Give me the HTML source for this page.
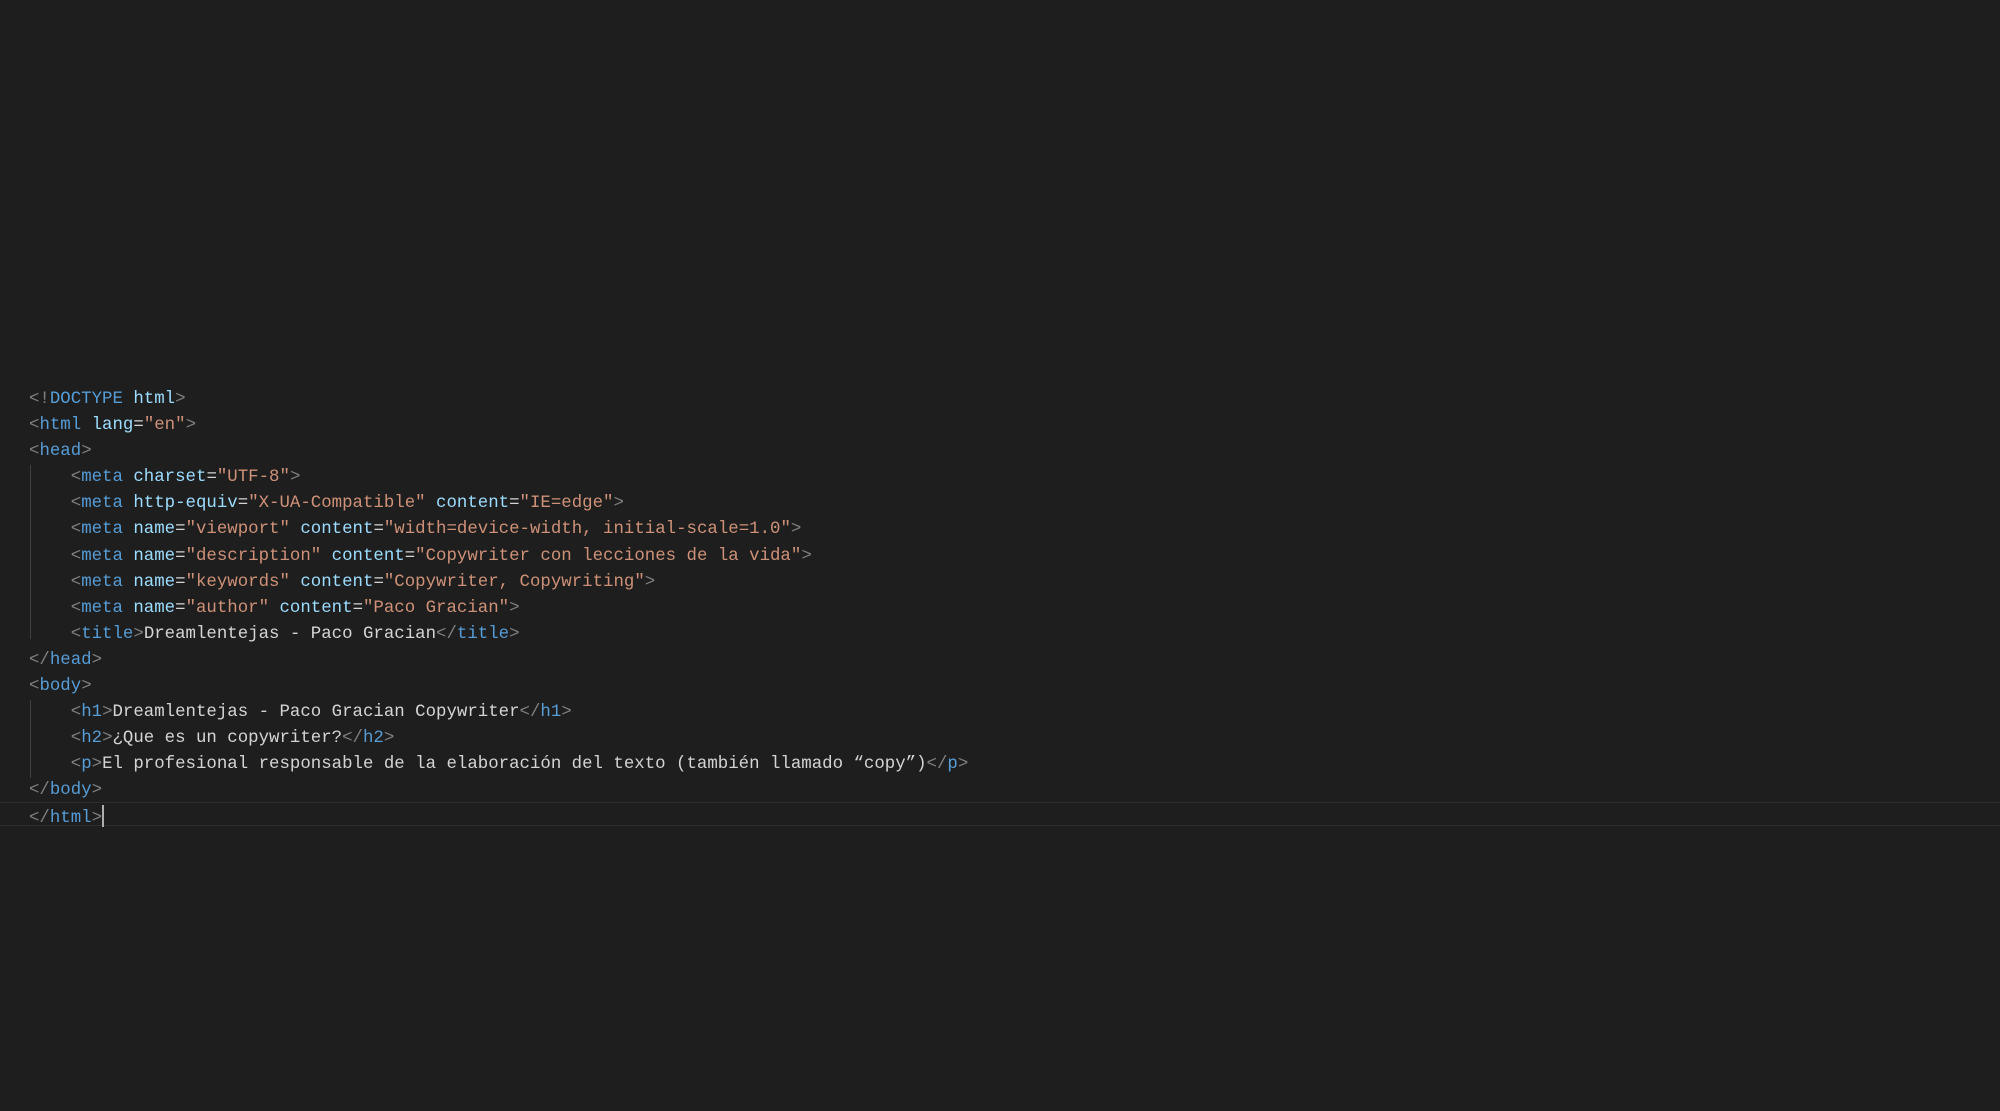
<!DOCTYPE html>
<html><head><style>
html,body{margin:0;background:#1e1e1e;width:2000px;height:1111px;overflow:hidden;}
.ed{position:absolute;left:29px;top:387px;font-family:"Liberation Mono",monospace;font-size:17.4px;line-height:26.1px;color:#d4d4d4;}
.l{height:26.1px;position:relative;white-space:pre}
.g{color:#808080}.t{color:#569cd6}.a{color:#9cdcfe}.s{color:#ce9178}.w{color:#d4d4d4}
.guide{position:absolute;left:30px;width:1px;background:#404040}
.cur{position:absolute;left:0;top:802px;width:2000px;height:24px;border-top:1px solid #2c2c2c;border-bottom:1px solid #2c2c2c;box-sizing:border-box}
.caret{display:inline-block;width:2px;height:22px;background:#aeafad;vertical-align:-5px}
</style></head><body>
<div class="cur"></div>
<div class="guide" style="top:465px;height:174px"></div>
<div class="guide" style="top:700px;height:78px"></div>
<div class="ed"><div class="l"><span class="g">&lt;!</span><span class="t">DOCTYPE</span> <span class="a">html</span><span class="g">&gt;</span></div><div class="l"><span class="g">&lt;</span><span class="t">html</span> <span class="a">lang</span>=<span class="s">"en"</span><span class="g">&gt;</span></div><div class="l"><span class="g">&lt;</span><span class="t">head</span><span class="g">&gt;</span></div><div class="l">    <span class="g">&lt;</span><span class="t">meta</span> <span class="a">charset</span>=<span class="s">"UTF-8"</span><span class="g">&gt;</span></div><div class="l">    <span class="g">&lt;</span><span class="t">meta</span> <span class="a">http-equiv</span>=<span class="s">"X-UA-Compatible"</span> <span class="a">content</span>=<span class="s">"IE=edge"</span><span class="g">&gt;</span></div><div class="l">    <span class="g">&lt;</span><span class="t">meta</span> <span class="a">name</span>=<span class="s">"viewport"</span> <span class="a">content</span>=<span class="s">"width=device-width, initial-scale=1.0"</span><span class="g">&gt;</span></div><div class="l">    <span class="g">&lt;</span><span class="t">meta</span> <span class="a">name</span>=<span class="s">"description"</span> <span class="a">content</span>=<span class="s">"Copywriter con lecciones de la vida"</span><span class="g">&gt;</span></div><div class="l">    <span class="g">&lt;</span><span class="t">meta</span> <span class="a">name</span>=<span class="s">"keywords"</span> <span class="a">content</span>=<span class="s">"Copywriter, Copywriting"</span><span class="g">&gt;</span></div><div class="l">    <span class="g">&lt;</span><span class="t">meta</span> <span class="a">name</span>=<span class="s">"author"</span> <span class="a">content</span>=<span class="s">"Paco Gracian"</span><span class="g">&gt;</span></div><div class="l">    <span class="g">&lt;</span><span class="t">title</span><span class="g">&gt;</span>Dreamlentejas - Paco Gracian<span class="g">&lt;/</span><span class="t">title</span><span class="g">&gt;</span></div><div class="l"><span class="g">&lt;/</span><span class="t">head</span><span class="g">&gt;</span></div><div class="l"><span class="g">&lt;</span><span class="t">body</span><span class="g">&gt;</span></div><div class="l">    <span class="g">&lt;</span><span class="t">h1</span><span class="g">&gt;</span>Dreamlentejas - Paco Gracian Copywriter<span class="g">&lt;/</span><span class="t">h1</span><span class="g">&gt;</span></div><div class="l">    <span class="g">&lt;</span><span class="t">h2</span><span class="g">&gt;</span>¿Que es un copywriter?<span class="g">&lt;/</span><span class="t">h2</span><span class="g">&gt;</span></div><div class="l">    <span class="g">&lt;</span><span class="t">p</span><span class="g">&gt;</span>El profesional responsable de la elaboración del texto (también llamado “copy”)<span class="g">&lt;/</span><span class="t">p</span><span class="g">&gt;</span></div><div class="l"><span class="g">&lt;/</span><span class="t">body</span><span class="g">&gt;</span></div><div class="l"><span class="g">&lt;/</span><span class="t">html</span><span class="g">&gt;</span><span class="caret"></span></div></div>
</body></html>
